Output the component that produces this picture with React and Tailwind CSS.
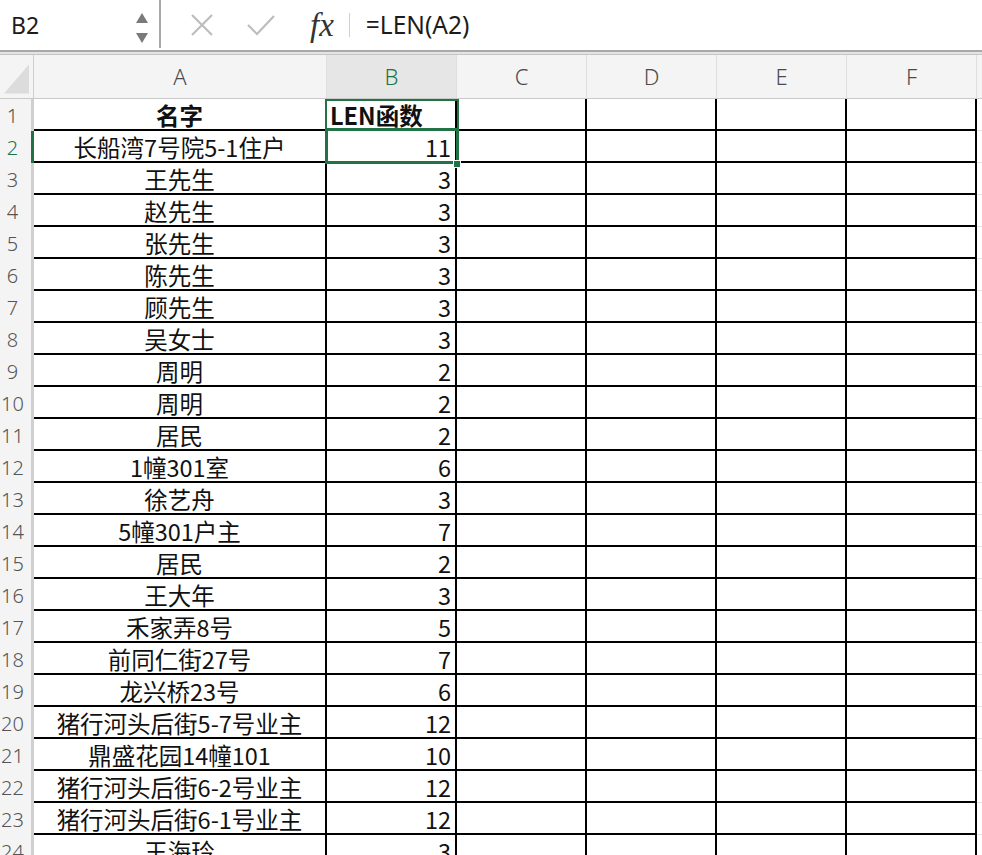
import React from "react";

const rows = [
  ["名字", "LEN函数"],
  ["长船湾7号院5-1住户", "11"],
  ["王先生", "3"],
  ["赵先生", "3"],
  ["张先生", "3"],
  ["陈先生", "3"],
  ["顾先生", "3"],
  ["吴女士", "3"],
  ["周明", "2"],
  ["周明", "2"],
  ["居民", "2"],
  ["1幢301室", "6"],
  ["徐艺舟", "3"],
  ["5幢301户主", "7"],
  ["居民", "2"],
  ["王大年", "3"],
  ["禾家弄8号", "5"],
  ["前同仁街27号", "7"],
  ["龙兴桥23号", "6"],
  ["猪行河头后街5-7号业主", "12"],
  ["鼎盛花园14幢101", "10"],
  ["猪行河头后街6-2号业主", "12"],
  ["猪行河头后街6-1号业主", "12"],
  ["王海玲", "3"],
];

const cjk = { fontFamily: '"Noto Sans CJK SC", "Noto Sans", sans-serif' };
const latin = { fontFamily: '"Noto Sans", "Liberation Sans", sans-serif' };

export default function App() {
  return (
    <div className="w-[982px] h-[855px] overflow-hidden bg-white" style={cjk}>
      {/* Formula bar */}
      <div className="h-[50px] flex items-center bg-white">
        <div className="w-[159px] h-full flex items-center justify-between pl-[11px] pr-[8px]">
          <span className="text-[23px] text-[#1c1c1c]" style={latin}>B2</span>
          <svg width="18" height="36" viewBox="0 0 18 36">
            <path d="M9 6 L15 16 L3 16 Z" fill="#7a7a7a" />
            <path d="M3 26 L15 26 L9 36 Z" fill="#7a7a7a" />
          </svg>
        </div>
        <div className="w-[2px] h-[48px] self-start bg-[#a8a8a8]" />
        <div className="flex items-center ml-[29px]">
          <svg width="24" height="24" viewBox="0 0 24 24">
            <path d="M2 2 L22 22 M22 2 L2 22" stroke="#bdbdbd" strokeWidth="2.2" fill="none" />
          </svg>
          <svg className="ml-[32px]" width="30" height="24" viewBox="0 0 30 24">
            <path d="M2 12 L11 21 L28 3" stroke="#bdbdbd" strokeWidth="2.2" fill="none" />
          </svg>
          <span
            className="ml-[34px] text-[33px] italic text-[#333] leading-none"
            style={{ fontFamily: '"Liberation Serif", serif' }}
          >
            fx
          </span>
          <div className="ml-[15px] w-px h-[24px] bg-[#cfcfcf]" />
          <span className="ml-[16px] text-[24.5px] text-[#1c1c1c]" style={latin}>=LEN(A2)</span>
        </div>
      </div>
      {/* separator band */}
      <div className="h-[5px] bg-[#e4e4e4] border-t-2 border-b border-t-[#a9a9a9] border-b-[#c4c4c4]" />
      {/* Column header */}
      <div className="h-[44px] flex bg-[#f4f4f4] border-b border-[#c9c9c9]" style={latin}>
        <div className="w-[34px] h-full border-r border-[#cfcfcf] flex items-end justify-end p-[4px]">
          <svg width="26" height="30" viewBox="0 0 26 30">
            <path d="M26 0 L26 30 L0 30 Z" fill="#dcdcdc" />
          </svg>
        </div>
        <div className="w-[293px] h-full flex items-center justify-center text-[22px] font-light text-[#4a4a4a] border-r border-[#dedede]">A</div>
        <div className="w-[130px] h-full flex items-center justify-center text-[22px] font-light text-[#217346] bg-[#e6e6e6] border-r border-[#dedede]">B</div>
        {["C", "D", "E", "F"].map((c) => (
          <div key={c} className="w-[130px] h-full flex items-center justify-center text-[22px] font-light text-[#4a4a4a] border-r border-[#dedede]">{c}</div>
        ))}
        <div className="flex-1 h-full" />
      </div>
      {/* Grid */}
      <div className="relative">
        {rows.map((r, i) => {
          const n = i + 1;
          const sel = n === 2;
          return (
            <div key={n} className="h-[32px] flex">
              <div
                className={`w-[34px] h-full flex items-center pt-[2px] bg-[#f4f4f4] border-r-[3px] ${sel ? "border-[#217346] text-[#217346]" : "border-[#d0d0d0] text-[#555]"}`}
                style={latin}
              >
                <span className="w-[25px] text-center text-[20px] font-light leading-none">{n}</span>
              </div>
              <div
                className={`w-[293px] h-full flex items-center justify-center pt-[3px] border-r-2 border-b-2 border-black text-[23.5px] leading-none text-[#111] whitespace-nowrap ${n === 1 ? "font-bold" : ""}`}
              >
                {r[0]}
              </div>
              <div
                className={`w-[130px] h-full flex items-center pt-[3px] border-r-2 border-b-2 border-black text-[23.5px] leading-none text-[#111] whitespace-nowrap ${n === 1 ? "justify-start pl-[3px] font-bold" : "justify-end pr-[4px]"}`}
              >
                {r[1]}
              </div>
              {[0, 1, 2, 3].map((k) => (
                <div key={k} className="w-[130px] h-full border-r-2 border-b-2 border-black" />
              ))}
              <div className="flex-1 h-full border-b border-[#e2e2e2]" />
            </div>
          );
        })}
        {/* selection overlays */}
        <div className="absolute left-[325px] top-0 w-[134px] h-[32px] border-2 border-[#217346]" />
        <div className="absolute left-[325px] top-[29px] w-[134px] h-[36px] border-[3px] border-[#217346]" />
        <div className="absolute left-[453px] top-[61px] w-[8px] h-[8px] bg-[#217346] border border-white" />
      </div>
    </div>
  );
}
